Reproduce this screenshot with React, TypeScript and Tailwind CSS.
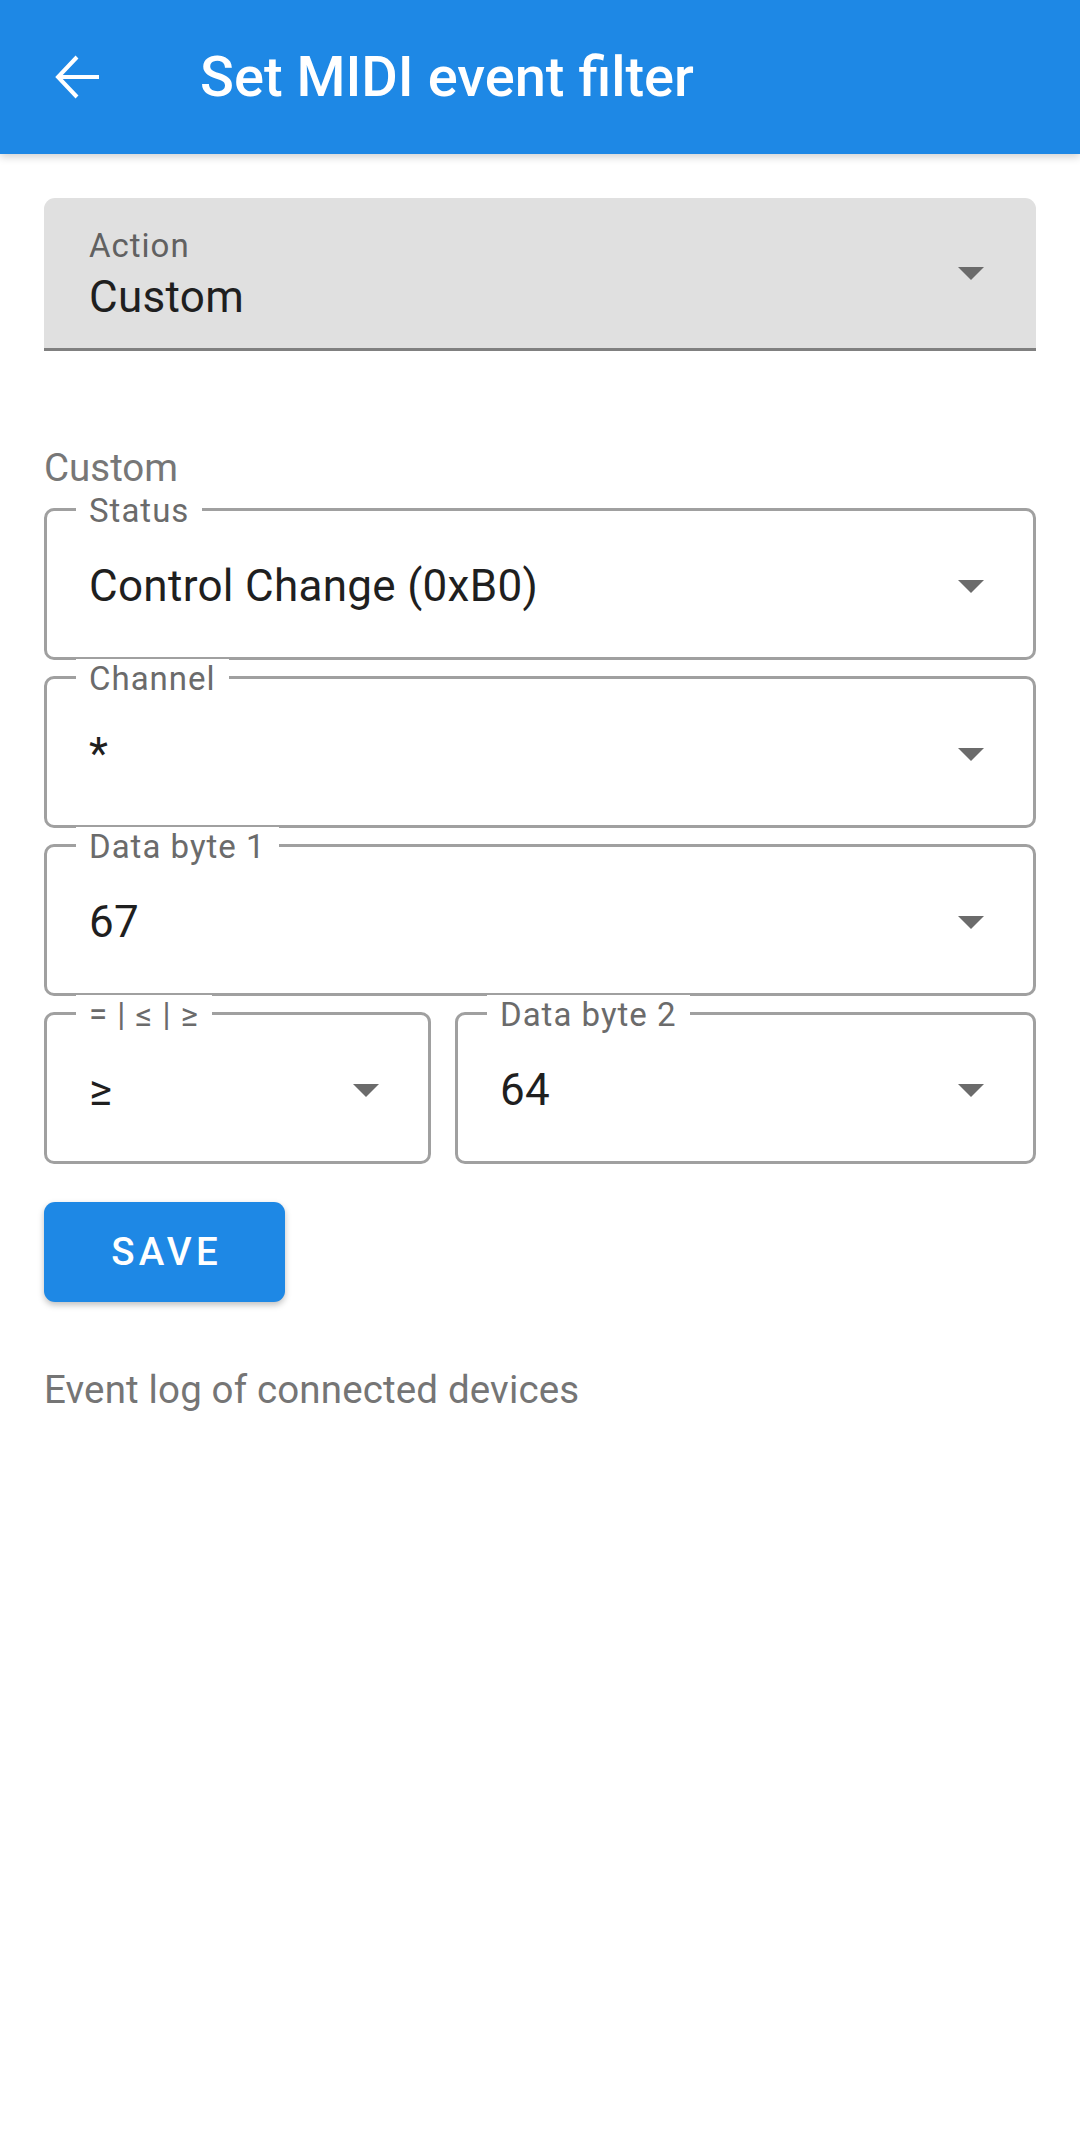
import React from 'react';

function Caret() {
  return (
    <svg width="26" height="13" viewBox="0 0 26 13" className="shrink-0">
      <polygon points="0,0 26,0 13,13" fill="#6b6b6b" />
    </svg>
  );
}

function OutlinedSelect({ label, value, className = '' }: { label: string; value: string; className?: string }) {
  return (
    <div
      className={`relative flex h-[152px] items-center justify-between rounded-[10px] border-[3px] border-[#a0a0a0] pt-[4px] pl-[42px] pr-[49px] ${className}`}
    >
      {/* notched label */}
      <span className="absolute -top-[20px] left-[29px] bg-white px-[13px] text-[33px] leading-[39px] tracking-[1px] text-[#6b6b6b]">
        {label}
      </span>
      <span className="text-[44px] leading-[52px] tracking-[0.3px] text-[#1f1f1f]">{value}</span>
      <Caret />
    </div>
  );
}

export default function App() {
  return (
    <div className="min-h-[2140px] w-[1080px] bg-white font-['Roboto',sans-serif]">
      <header className="relative z-10 flex h-[154px] items-center bg-[#1e88e5] shadow-[0_3px_8px_rgba(0,0,0,0.18)]">
        <svg width="44" height="44" viewBox="0 0 44 44" className="ml-[55px] shrink-0">
          <polyline points="22,2 3,22 22,42" fill="none" stroke="white" strokeWidth="4" />
          <line x1="4" y1="22" x2="44" y2="22" stroke="white" strokeWidth="4" />
        </svg>
        <h1 className="ml-[101px] text-[56px] font-medium leading-[64px] text-white">Set MIDI event filter</h1>
      </header>

      <main className="flex flex-col px-[44px]">
        {/* filled select */}
        <div className="mt-[44px] flex h-[153px] items-center justify-between rounded-t-[11px] border-b-[3px] border-[#808080] bg-[#e0e0e0] pl-[45px] pr-[52px]">
          <div className="flex flex-col pt-[2px]">
            <span className="text-[33px] leading-[39px] tracking-[1px] text-[#616161]">Action</span>
            <span className="mt-[6px] text-[44px] leading-[52px] tracking-[0.3px] text-[#1f1f1f]">Custom</span>
          </div>
          <Caret />
        </div>

        <p className="mt-[94px] text-[38.5px] leading-[45px] text-[#777777]">Custom</p>

        <div className="mt-[18px] flex flex-col gap-[16px]">
          <OutlinedSelect label="Status" value="Control Change (0xB0)" />
          <OutlinedSelect label="Channel" value="*" />
          <OutlinedSelect label="Data byte 1" value="67" />
          <div className="flex gap-[24px]">
            <OutlinedSelect label="= | ≤ | ≥" value="≥" className="w-[387px] shrink-0" />
            <OutlinedSelect label="Data byte 2" value="64" className="flex-1" />
          </div>
        </div>

        <button className="mt-[38px] flex h-[100px] w-[241px] items-center justify-center rounded-[11px] bg-[#1e88e5] pl-[4px] text-[38.5px] font-medium tracking-[4.2px] text-white shadow-[0_3px_6px_rgba(0,0,0,0.25)]">
          SAVE
        </button>

        <p className="mt-[65px] text-[38.5px] leading-[45px] tracking-[0.15px] text-[#757575]">Event log of connected devices</p>
      </main>
    </div>
  );
}
